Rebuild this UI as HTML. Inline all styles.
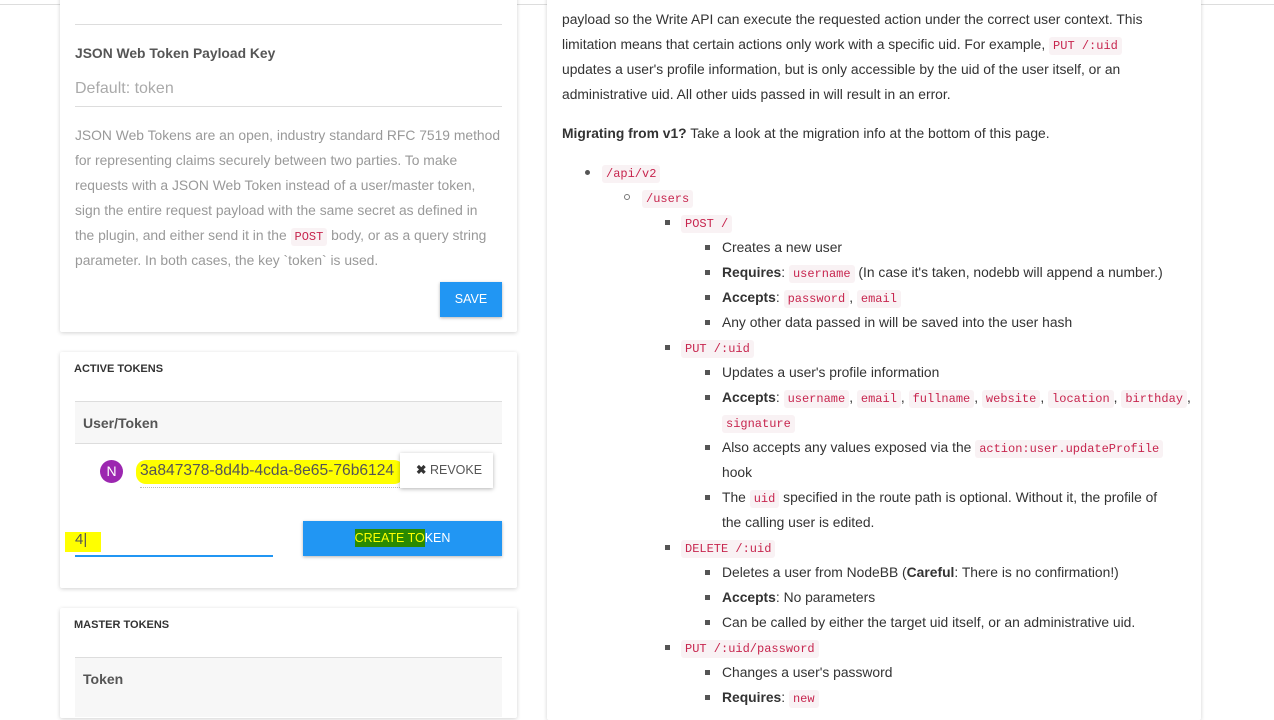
<!DOCTYPE html>
<html><head><meta charset="utf-8"><style>
*{margin:0;padding:0;box-sizing:border-box}
body{width:1274px;height:700px;overflow:hidden;background:#fff;font-family:"Liberation Sans",sans-serif;font-size:13.85px;color:#333;position:relative}
.a{position:absolute;white-space:nowrap;line-height:20px}
.card{position:absolute;background:#fff;box-shadow:0 1px 4px rgba(0,0,0,.18);border-radius:2px}
code{font-family:"Liberation Mono",monospace;font-size:12px;color:#c7254e;background:#f9f2f4;padding:2px 4px;border-radius:3px}
.g{color:#999}
.b{font-weight:bold}
.d{position:absolute;width:5px;height:5px;background:#555}
.btn{position:absolute;background:#2196f3;color:#fff;font-size:12.5px;text-align:center;box-shadow:0 1px 3px rgba(0,0,0,.3)}
</style></head><body>
<div style="position:absolute;left:0;top:4px;width:1274px;height:1px;background:#ddd"></div>

<div class="card" style="left:60px;top:-10px;width:457px;height:342px"></div>
<div style="position:absolute;left:75px;top:24px;width:427px;height:1px;background:#ddd"></div>
<div class="a b" style="left:75px;top:43px;color:#555">JSON Web Token Payload Key</div>
<div class="a" style="left:75px;top:79px;font-size:16px;color:#aaa">Default: token</div>
<div style="position:absolute;left:75px;top:106px;width:427px;height:1px;background:#ddd"></div>
<div class="a g" style="left:75px;top:125px">JSON Web Tokens are an open, industry standard RFC 7519 method</div>
<div class="a g" style="left:75px;top:150px">for representing claims securely between two parties. To make</div>
<div class="a g" style="left:75px;top:175px">requests with a JSON Web Token instead of a user/master token,</div>
<div class="a g" style="left:75px;top:200px">sign the entire request payload with the same secret as defined in</div>
<div class="a g" style="left:75px;top:225px">the plugin, and either send it in the <code>POST</code> body, or as a query string</div>
<div class="a g" style="left:75px;top:250px">parameter. In both cases, the key `token` is used.</div>
<div class="btn" style="left:440px;top:282px;width:62px;height:35px;line-height:35px">SAVE</div>

<div class="card" style="left:60px;top:352px;width:457px;height:236px"></div>
<div class="a b" style="left:74px;top:359px;font-size:11px;color:#333">ACTIVE TOKENS</div>
<div style="position:absolute;left:75px;top:401px;width:427px;height:43px;background:#f7f7f7;border-top:1px solid #ddd;border-bottom:1px solid #ddd"></div>
<div class="a b" style="left:83px;top:413px;color:#555;font-size:14px">User/Token</div>
<div style="position:absolute;left:100px;top:460px;width:23px;height:23px;border-radius:50%;background:#9c27b0;color:#fff;text-align:center;line-height:23px;font-size:14px">N</div>
<div style="position:absolute;left:136px;top:460px;width:268px;height:24px;background:#ff0;border-radius:10px"></div>
<div class="a" style="left:140px;top:461px;font-size:15.6px;color:#555">3a847378-8d4b-4cda-8e65-76b6124</div>
<div style="position:absolute;left:140px;top:487px;width:262px;border-top:1px dotted #bbb"></div>
<div style="position:absolute;left:400px;top:453px;width:93px;height:35px;background:#fff;box-shadow:0 1px 4px rgba(0,0,0,.3);font-size:12.5px;color:#555;line-height:35px;padding-left:16px"><b style="color:#333">✖</b> REVOKE</div>
<div style="position:absolute;left:65px;top:532px;width:36px;height:20px;background:#ff0"></div>
<div class="a" style="left:75px;top:530px;font-size:15px;color:#555">4|</div>
<div style="position:absolute;left:75px;top:555px;width:198px;height:2px;background:#2196f3"></div>
<div class="btn" style="left:303px;top:521px;width:199px;height:35px;line-height:35px"><span style="background:#2a8a00;color:#ff0;padding:2px 0">CREATE TO</span>KEN</div>

<div class="card" style="left:60px;top:608px;width:457px;height:110px"></div>
<div class="a b" style="left:74px;top:615px;font-size:11px">MASTER TOKENS</div>
<div style="position:absolute;left:75px;top:657px;width:427px;height:60px;background:#f7f7f7;border-top:1px solid #ddd"></div>
<div class="a b" style="left:83px;top:669px;color:#555;font-size:14px">Token</div>

<div class="card" style="left:547px;top:-10px;width:654px;height:730px"></div>
<div class="a" style="left:562px;top:9px">payload so the Write API can execute the requested action under the correct user context. This</div>
<div class="a" style="left:562px;top:34px">limitation means that certain actions only work with a specific uid. For example, <code>PUT /:uid</code></div>
<div class="a" style="left:562px;top:59px">updates a user's profile information, but is only accessible by the uid of the user itself, or an</div>
<div class="a" style="left:562px;top:84px">administrative uid. All other uids passed in will result in an error.</div>
<div class="a" style="left:562px;top:123px"><b>Migrating from v1?</b> Take a look at the migration info at the bottom of this page.</div>

<div style="position:absolute;left:585px;top:170px;width:5px;height:5px;border-radius:50%;background:#555"></div>
<div class="a" style="left:602px;top:162px"><code>/api/v2</code></div>
<div style="position:absolute;left:624px;top:194px;width:6px;height:6px;border-radius:50%;border:1px solid #777"></div>
<div class="a" style="left:642px;top:187px"><code>/users</code></div>

<div class="d" style="left:665px;top:220px"></div><div class="a" style="left:681px;top:212px"><code>POST /</code></div>
<div class="d" style="left:705px;top:245px"></div><div class="a" style="left:722px;top:237px">Creates a new user</div>
<div class="d" style="left:705px;top:270px"></div><div class="a" style="left:722px;top:262px"><b>Requires</b>: <code>username</code> (In case it's taken, nodebb will append a number.)</div>
<div class="d" style="left:705px;top:295px"></div><div class="a" style="left:722px;top:287px"><b>Accepts</b>: <code>password</code>, <code>email</code></div>
<div class="d" style="left:705px;top:320px"></div><div class="a" style="left:722px;top:312px">Any other data passed in will be saved into the user hash</div>

<div class="d" style="left:665px;top:345px"></div><div class="a" style="left:681px;top:337px"><code>PUT /:uid</code></div>
<div class="d" style="left:705px;top:370px"></div><div class="a" style="left:722px;top:362px">Updates a user's profile information</div>
<div class="d" style="left:705px;top:395px"></div><div class="a" style="left:722px;top:387px"><b>Accepts</b>: <code>username</code>, <code>email</code>, <code>fullname</code>, <code>website</code>, <code>location</code>, <code>birthday</code>,</div>
<div class="a" style="left:722px;top:412px"><code>signature</code></div>
<div class="d" style="left:705px;top:445px"></div><div class="a" style="left:722px;top:437px">Also accepts any values exposed via the <code>action:user.updateProfile</code></div>
<div class="a" style="left:722px;top:462px">hook</div>
<div class="d" style="left:705px;top:495px"></div><div class="a" style="left:722px;top:487px">The <code>uid</code> specified in the route path is optional. Without it, the profile of</div>
<div class="a" style="left:722px;top:512px">the calling user is edited.</div>

<div class="d" style="left:665px;top:545px"></div><div class="a" style="left:681px;top:537px"><code>DELETE /:uid</code></div>
<div class="d" style="left:705px;top:570px"></div><div class="a" style="left:722px;top:562px">Deletes a user from NodeBB (<b>Careful</b>: There is no confirmation!)</div>
<div class="d" style="left:705px;top:595px"></div><div class="a" style="left:722px;top:587px"><b>Accepts</b>: No parameters</div>
<div class="d" style="left:705px;top:620px"></div><div class="a" style="left:722px;top:612px">Can be called by either the target uid itself, or an administrative uid.</div>

<div class="d" style="left:665px;top:645px"></div><div class="a" style="left:681px;top:637px"><code>PUT /:uid/password</code></div>
<div class="d" style="left:705px;top:670px"></div><div class="a" style="left:722px;top:662px">Changes a user's password</div>
<div class="d" style="left:705px;top:695px"></div><div class="a" style="left:722px;top:687px"><b>Requires</b>: <code>new</code></div>
</body></html>
